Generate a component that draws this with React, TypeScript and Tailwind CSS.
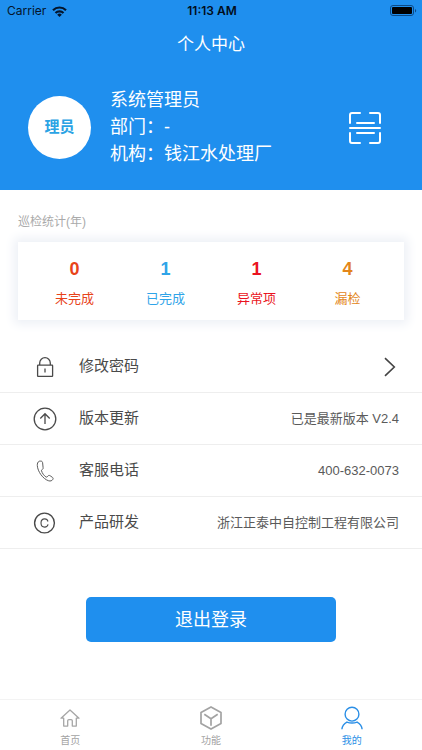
import type { ReactNode } from "react";

const stats = [
  { label: "未完成", value: 0, color: "text-[#e8431a]" },
  { label: "已完成", value: 1, color: "text-[#2fa4e8]" },
  { label: "异常项", value: 1, color: "text-[#ea1320]" },
  { label: "漏检", value: 4, color: "text-[#e3861a]" },
];

function WifiIcon() {
  return (
    <svg viewBox="0 0 15 11" className="h-[11px] w-[15px]" fill="none" stroke="#04152b" strokeWidth="2.2">
      <path d="M1 4.200a9.200 9.200 0 0 1 13 0" />
      <path d="M3.500 7a5.700 5.700 0 0 1 8 0" />
      <path d="M7.500 11 5.200 8.700a3.200 3.200 0 0 1 4.600 0z" fill="#04152b" stroke="none" />
    </svg>
  );
}

function BatteryIcon() {
  return (
    <svg viewBox="0 0 27 12" className="h-3 w-[27px]">
      <rect x="0.5" y="0.5" width="23" height="10" rx="2.5" fill="none" stroke="#0c4a86" />
      <rect x="2" y="2" width="20" height="7" rx="1" fill="#000" />
      <path d="M25 4v3.400c.8-.3 1.200-.9 1.200-1.700S25.800 4.300 25 4z" fill="#0c4a86" />
    </svg>
  );
}

function ScanIcon() {
  return (
    <svg viewBox="0 0 32 32" className="size-8" fill="none" stroke="#fff" strokeWidth="2" strokeLinecap="round">
      <path d="M1 11V3a2 2 0 0 1 2-2h8M21 1h8a2 2 0 0 1 2 2v8M31 21v8a2 2 0 0 1-2 2h-8M11 31H3a2 2 0 0 1-2-2v-8" />
      <path d="M8 11h17M1 16h30M8 21h17" />
    </svg>
  );
}

function LockIcon() {
  return (
    <svg viewBox="0 0 24 24" className="size-6" fill="none" stroke="#4a4a4a" strokeWidth="1.3" strokeLinejoin="round">
      <rect x="4.600" y="10.200" width="15" height="11.200" rx="0.500" />
      <path d="M6.700 10V8a5.300 5.300 0 0 1 10.600 0v2M12 13.500v4" />
    </svg>
  );
}

function UpdateIcon() {
  return (
    <svg viewBox="0 0 24 24" className="size-6" fill="none" stroke="#4a4a4a" strokeWidth="1.3">
      <circle cx="12" cy="12" r="10.800" />
      <path d="M12 17V7M7.300 11.500 12 6.700l4.700 4.800" />
    </svg>
  );
}

function PhoneIcon() {
  return (
    <svg viewBox="0 0 24 24" className="size-6" fill="none" stroke="#5c5c5c" strokeWidth="1" strokeLinejoin="round">
      <path d="M6.200 2.200C4.700 3 4.200 4.600 4.300 6.500c.3 6 5.700 13.600 11.400 15.300 1.700.5 3.400 0 4.200-1.500.4-.8.200-1.400-.4-1.900l-2.300-1.600c-.9-.6-1.700-.5-2.300.2l-.7.8c-.4.400-.8.400-1.300.1-2-1.300-3.700-3.700-4.400-6.200-.1-.5 0-.9.500-1.100.9-.4 1.300-.9 1.100-1.900l-.5-5c-.1-1.100-.8-1.600-1.800-1.600-.6 0-1.100 0-1.600.1z" />
    </svg>
  );
}

function CopyrightIcon() {
  return (
    <svg viewBox="0 0 24 24" className="size-6" fill="none" stroke="#4a4a4a" strokeWidth="1.4">
      <circle cx="11.500" cy="12" r="9.900" />
      <path
        d="M15 10.500c-.4-1.600-1.700-2.600-3.300-2.600-2.200 0-3.700 1.600-3.700 4.100s1.500 4.100 3.700 4.100c1.700 0 3-1 3.400-2.700"
        strokeWidth="1.100"
      />
    </svg>
  );
}

function ChevronIcon() {
  return (
    <svg viewBox="0 0 12 20" className="h-5 w-3" fill="none" stroke="#444" strokeWidth="1.600">
      <path d="m1 1.200 9.300 8.800L1 18.800" />
    </svg>
  );
}

function HomeIcon() {
  return (
    <svg viewBox="0 0 24 24" className="size-6" fill="none" stroke="#a6a6a6" strokeWidth="1.300" strokeLinejoin="round">
      <path d="M12 4 3 12.200h2.700v7.900h4v-5.300c0-.8.500-1.200 1.200-1.200h2.200c.7 0 1.200.4 1.200 1.200v5.300h4v-7.900H21z" />
    </svg>
  );
}

function CubeIcon() {
  return (
    <svg viewBox="0 0 24 24" className="size-6" fill="none" stroke="#a3a3a3" strokeWidth="1.700" strokeLinejoin="round">
      <path d="M12 .9 22 6.400v11.200L12 23.100 2 17.600V6.400z" />
      <path d="m5.300 8.200 6.700 4.600 6.700-4.600M12 12.800v7" />
    </svg>
  );
}

function UserIcon() {
  return (
    <svg viewBox="0 0 24 24" className="size-6" fill="none" stroke="#2b8fe6" strokeWidth="1.400">
      <circle cx="12" cy="8.200" r="6.900" />
      <path d="M1.900 23.300c.3-3.200 2.100-5.700 5-7.200 3.200 1.200 7 1.200 10.200 0 2.900 1.500 4.700 4 5 7.200" />
    </svg>
  );
}

const tabs = [
  { label: "首页", icon: <HomeIcon />, active: false },
  { label: "功能", icon: <CubeIcon />, active: false },
  { label: "我的", icon: <UserIcon />, active: true },
];

function MenuRow({ icon, label, children }: { icon: ReactNode; label: string; children: ReactNode }) {
  return (
    <li className="flex h-[52px] items-center border-b border-[#eeeeee] pr-[23px] pl-[33px]">
      {icon}
      <span className="ml-[22px] text-[15px] text-[#4a4a4a]">{label}</span>
      <span className="ml-auto text-[13px] text-[#5a5a5a]">{children}</span>
    </li>
  );
}

export default function App() {
  return (
    <div className="flex min-h-screen flex-col bg-white font-['Liberation_Sans','Noto_Sans_CJK_SC',sans-serif]">
      <header className="bg-[#1f8fee] pb-[22px] text-white">
        <div className="grid h-[22px] grid-cols-3 items-center pr-[5px] pl-[7px] font-['Inter',sans-serif] text-xs text-[#04152b]">
          <div className="flex items-center gap-[6px]">
            Carrier
            <WifiIcon />
          </div>
          <span className="text-center font-semibold text-[#020d1c]">11:13 AM</span>
          <div className="flex justify-end">
            <BatteryIcon />
          </div>
        </div>
        <h1 className="flex h-[45px] items-center justify-center text-[17px]">个人中心</h1>
        <div className="mt-5 flex items-center pr-[41px] pl-7">
          <div className="flex size-[63px] items-center justify-center rounded-full bg-white text-[15px] font-bold text-[#2ba3e4]">
            理员
          </div>
          <div className="ml-[19px] text-lg leading-[27px]">
            <p>系统管理员</p>
            <p>部门：-</p>
            <p>机构：钱江水处理厂</p>
          </div>
          <button type="button" aria-label="扫一扫" className="ml-auto">
            <ScanIcon />
          </button>
        </div>
      </header>

      <main>
        <section className="px-[18px] pt-[22px]">
          <h2 className="text-xs leading-5 text-[#aaaaaa]">巡检统计(年)</h2>
          <div className="mt-[10px] grid grid-cols-4 bg-white px-[11px] pt-[15px] pb-[11px] shadow-[0_0_10px_4px_#edf0f6]">
            {stats.map((stat) => (
              <div key={stat.label} className={`text-center ${stat.color}`}>
                <p className="text-lg leading-6 font-bold">{stat.value}</p>
                <p className="mt-2 text-[13px] leading-5">{stat.label}</p>
              </div>
            ))}
          </div>
        </section>

        <ul className="mt-[21px]">
          <MenuRow icon={<LockIcon />} label="修改密码">
            <button type="button" aria-label="修改密码" className="mr-[3px] block">
              <ChevronIcon />
            </button>
          </MenuRow>
          <MenuRow icon={<UpdateIcon />} label="版本更新">
            已是最新版本 V2.4
          </MenuRow>
          <MenuRow icon={<PhoneIcon />} label="客服电话">
            <a href="tel:4006320073">400-632-0073</a>
          </MenuRow>
          <MenuRow icon={<CopyrightIcon />} label="产品研发">
            浙江正泰中自控制工程有限公司
          </MenuRow>
        </ul>

        <div className="px-[86px] pt-12 pb-6">
          <button type="button" className="h-[45px] w-full rounded-[5px] bg-[#1f8fee] text-lg text-white">
            退出登录
          </button>
        </div>
      </main>

      <nav className="mt-auto grid h-[51px] grid-cols-3 border-t border-[#f3f3f3]">
        {tabs.map((tab) => (
          <a
            key={tab.label}
            href="#"
            className={`flex flex-col items-center pt-[6px] text-[10px] leading-[22px] ${tab.active ? "text-[#2b8fe6]" : "text-[#a3a3a3]"}`}
          >
            {tab.icon}
            {tab.label}
          </a>
        ))}
      </nav>
    </div>
  );
}
